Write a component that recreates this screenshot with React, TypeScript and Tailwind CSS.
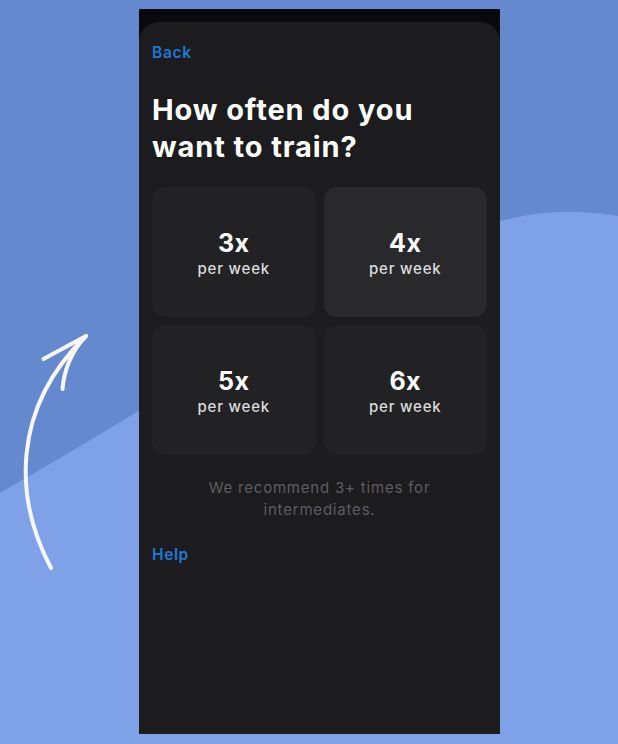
const options = [
  { count: "3x", active: false },
  { count: "4x", active: true },
  { count: "5x", active: false },
  { count: "6x", active: false },
];

const Backdrop = () => (
  <svg className="absolute inset-0" width="618" height="744" viewBox="0 0 618 744">
    <path
      d="M0 493 C 250 350, 430 212, 565 212 C 590 212, 605 214, 618 216 L 618 744 L 0 744 Z"
      fill="#7ea1e8"
    />
    {/* hand-drawn arrow pointing at the phone */}
    <g fill="none" stroke="#f7f7f9" strokeWidth="4" strokeLinecap="round" strokeLinejoin="round">
      <path d="M51 568 C 15 500, 10 410, 86 336" />
      <path d="M86 336 L 43.5 359" />
      <path d="M86 336 C 72 350, 64 370, 62.5 389" />
    </g>
  </svg>
);

const App = () => {
  return (
    <div
      className="relative w-full h-[744px] overflow-hidden bg-[#6489cf]"
      style={{ fontFamily: "Inter, 'Noto Sans', sans-serif" }}
    >
      <Backdrop />
      <div className="relative ml-[139px] mt-[9px] w-[361px] h-[725px] bg-[#0a090c] pt-[13px] flex flex-col">
        <div className="flex-1 bg-[#1c1b1e] rounded-t-[20px] px-[13px] flex flex-col">
          <button className="self-start mt-[21px] text-[15.5px] leading-[20px] font-semibold text-[#1f7ad6] tracking-[0.7px]">
            Back
          </button>
          <h1 className="mt-[28px] text-[29px] leading-[37px] font-bold text-white tracking-[0.9px]">
            How often do you
            <br />
            want to train?
          </h1>
          <div className="mt-[22px] grid grid-cols-2 gap-[8px]">
            {options.map((o) => (
              <div
                key={o.count}
                className={`h-[130px] rounded-[13px] flex flex-col items-center justify-center pt-[4px] ${
                  o.active ? "bg-[#29292c]" : "bg-[#222124]"
                }`}
              >
                <span className="text-[25px] leading-[28px] font-bold text-white tracking-[0.5px]">
                  {o.count}
                </span>
                <span className="text-[15px] leading-[20px] font-medium text-[#dcdcdc] tracking-[0.8px] mt-[2px]">
                  per week
                </span>
              </div>
            ))}
          </div>
          <p className="mt-[22px] text-center text-[15px] leading-[22px] text-[#5e5d62] tracking-[0.8px]">
            We recommend 3+ times for
            <br />
            intermediates.
          </p>
          <button className="self-start mt-[24px] text-[15.5px] leading-[20px] font-semibold text-[#1f7ad6] tracking-[0.6px]">
            Help
          </button>
        </div>
      </div>
    </div>
  );
};

export default App;
